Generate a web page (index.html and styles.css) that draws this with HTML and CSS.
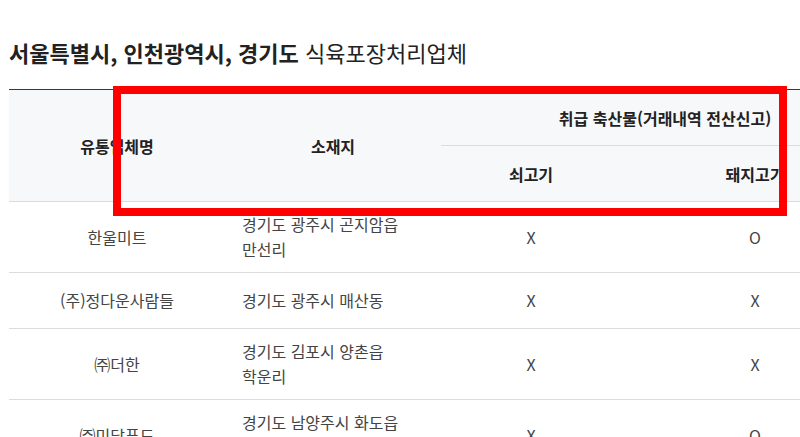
FILE: index.html
```html
<!DOCTYPE html>
<html lang="ko">
<head>
<meta charset="utf-8">
<link rel="stylesheet" href="styles.css">
</head>
<body>
<div class="page">
  <h2 class="title"><strong>서울특별시, 인천광역시, 경기도</strong> 식육포장처리업체</h2>
  <table class="tbl">
    <colgroup>
      <col class="c1"><col class="c2"><col class="c3"><col class="c4">
    </colgroup>
    <thead>
      <tr class="h1">
        <th rowspan="2">유통업체명</th>
        <th rowspan="2">소재지</th>
        <th colspan="2" class="group">취급 축산물(거래내역 전산신고)</th>
      </tr>
      <tr class="h2">
        <th>쇠고기</th>
        <th>돼지고기</th>
      </tr>
    </thead>
    <tbody>
      <tr class="tall"><td>한울미트</td><td class="addr">경기도 광주시 곤지암읍 만선리</td><td>X</td><td>O</td></tr>
      <tr class="short"><td>(주)정다운사람들</td><td class="addr">경기도 광주시 매산동</td><td>X</td><td>X</td></tr>
      <tr class="tall"><td>㈜더한</td><td class="addr">경기도 김포시 양촌읍 학운리</td><td>X</td><td>X</td></tr>
      <tr class="tall"><td>㈜미담푸드</td><td class="addr">경기도 남양주시 화도읍 가곡리</td><td>X</td><td>O</td></tr>
    </tbody>
  </table>
</div>
<div class="mark"></div>
</body>
</html>
```
FILE: styles.css
```css
html, body {
  margin: 0;
  padding: 0;
  background: #fff;
  overflow: hidden;
}
body {
  font-family: "Noto Sans CJK KR", "Noto Sans", sans-serif;
  color: #333;
}
.page {
  padding: 36px 0 0 9px;
  width: 900px;
}
.title {
  margin: 0 0 21px 0;
  font-size: 22px;
  line-height: 32px;
  font-weight: 400;
  color: #222;
}
.title strong {
  font-weight: 700;
}
.tbl {
  border-collapse: collapse;
  table-layout: fixed;
  width: 880px;
  border-top: 1px solid #1f3a6b;
  font-size: 16px;
  word-break: keep-all;
}
.c1 { width: 216px; }
.c2 { width: 216px; }
.c3 { width: 180px; }
.c4 { width: 268px; }
thead th {
  background: #f7f8fa;
  font-weight: 700;
  color: #222;
  border-bottom: 1px solid #dcdcdc;
  padding: 0;
  text-align: center;
}
.h1 { height: 56px; }
.h2 { height: 56px; }
tbody td {
  text-align: center;
  color: #444;
  border-bottom: 1px solid #dcdcdc;
  padding: 10px 16px;
  line-height: 25px;
  vertical-align: middle;
}
tbody td.addr {
  text-align: left;
  padding-left: 17px;
  padding-right: 16px;
}
tr.tall { height: 71px; }
tr.short { height: 56px; }
.mark {
  position: absolute;
  left: 113px;
  top: 86px;
  width: 658px;
  height: 114px;
  border: 8px solid #ff0000;
}
```
